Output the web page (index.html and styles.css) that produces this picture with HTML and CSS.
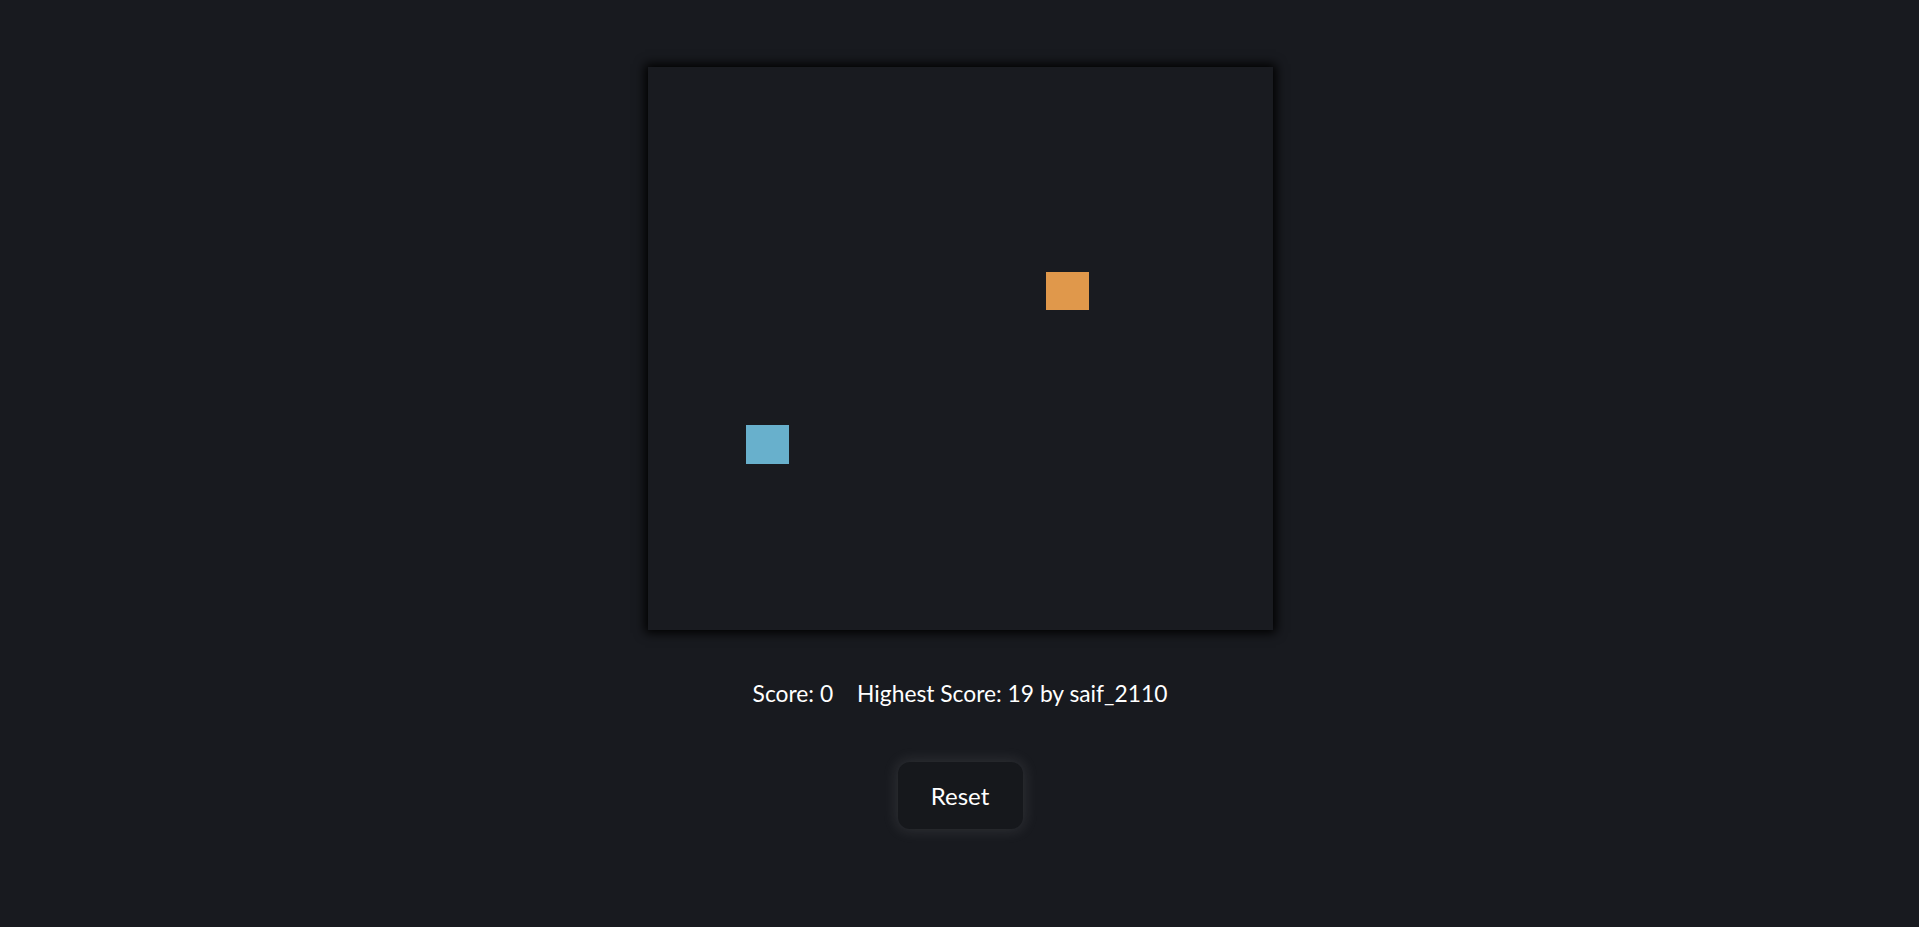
FILE: index.html
```html
<!DOCTYPE html>
<html>
<head>
<meta charset="utf-8">
<title>Snake</title>
<link rel="stylesheet" href="styles.css">
</head>
<body>
<main class="page">
  <div class="board">
    <div class="cell snake" style="left:98px;top:358px"></div>
    <div class="cell food" style="left:398px;top:205px"></div>
  </div>
  <div class="scores">
    <span class="score">Score: 0</span>
    <span class="high">Highest Score: 19 by saif_2110</span>
  </div>
  <button class="reset">Reset</button>
</main>
</body>
</html>
```
FILE: styles.css
```css
html, body {
  margin: 0;
  padding: 0;
  height: 100%;
  background: #181a1f;
}
.page {
  display: flex;
  flex-direction: column;
  align-items: center;
  padding-top: 67px;
  padding-left: 1px;
  font-family: Lato, "Open Sans", sans-serif;
  color: #ffffff;
}
.board {
  position: relative;
  width: 625px;
  height: 563px;
  background: #191b20;
  box-shadow: 0 0 10px 3px #000;
}
.cell {
  position: absolute;
  width: 43px;
  height: 39px;
}
.snake { background: #68b0cc; }
.food { background: #e0984b; height: 38px; }
.scores {
  margin-top: 48px;
  font-size: 22.8px;
  line-height: 30px;
  display: flex;
  gap: 24px;
}
.reset {
  margin-top: 54px;
  width: 125px;
  height: 67px;
  border: none;
  border-radius: 12px;
  background: #16181c;
  color: #fff;
  font-family: Lato, "Open Sans", sans-serif;
  font-size: 24px;
  box-shadow: 0 0 14px 2px rgba(200, 200, 200, 0.13);
  cursor: pointer;
}
```
